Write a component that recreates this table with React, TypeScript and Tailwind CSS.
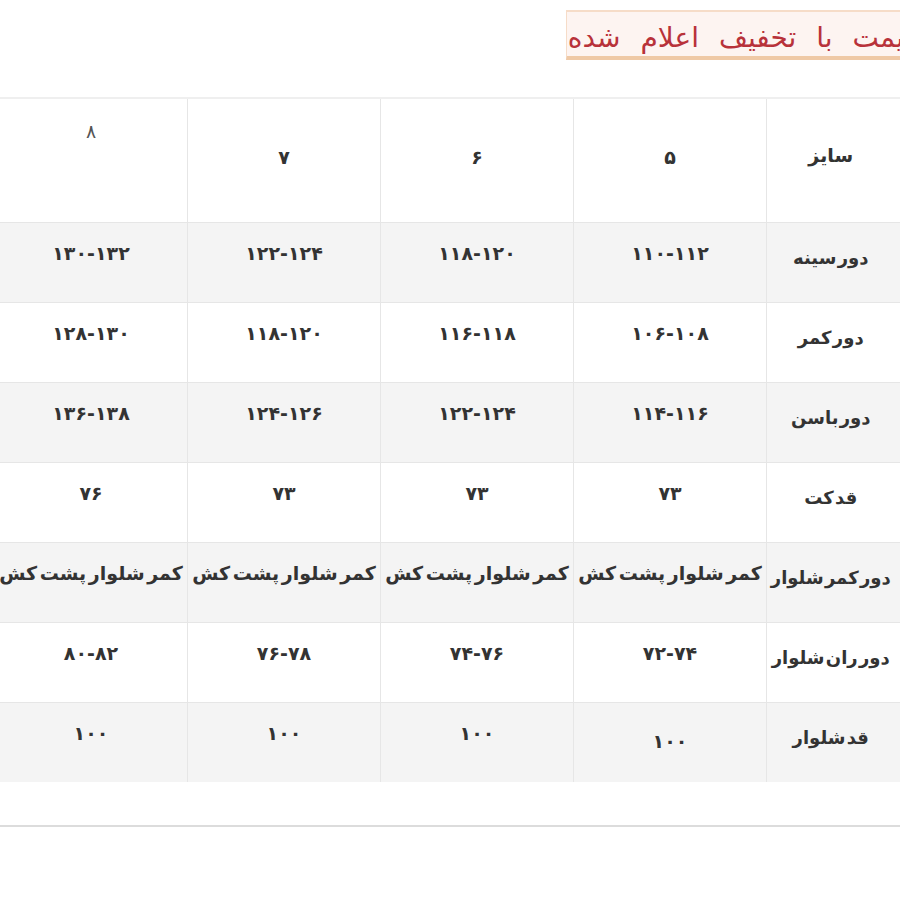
const sizes = ['۵', '۶', '۷', '۸']

const rows: { label: string; values: string[] }[] = [
  { label: 'دور سینه', values: ['۱۱۰-۱۱۲', '۱۱۸-۱۲۰', '۱۲۲-۱۲۴', '۱۳۰-۱۳۲'] },
  { label: 'دور کمر', values: ['۱۰۶-۱۰۸', '۱۱۶-۱۱۸', '۱۱۸-۱۲۰', '۱۲۸-۱۳۰'] },
  { label: 'دور باسن', values: ['۱۱۴-۱۱۶', '۱۲۲-۱۲۴', '۱۲۴-۱۲۶', '۱۳۶-۱۳۸'] },
  { label: 'قد کت', values: ['۷۳', '۷۳', '۷۳', '۷۶'] },
  {
    label: 'دور کمر شلوار',
    values: ['کمر شلوار پشت کش', 'کمر شلوار پشت کش', 'کمر شلوار پشت کش', 'کمر شلوار پشت کش'],
  },
  { label: 'دور ران شلوار', values: ['۷۲-۷۴', '۷۴-۷۶', '۷۶-۷۸', '۸۰-۸۲'] },
  { label: 'قد شلوار', values: ['۱۰۰', '۱۰۰', '۱۰۰', '۱۰۰'] },
]

export default function App() {
  return (
    <div
      className="w-[900px] h-[900px] overflow-hidden bg-white text-[#333]"
      style={{ fontFamily: '"DejaVu Sans", sans-serif' }}
    >
      {/* discount notice */}
      <div className="pt-[10px] pl-[566px]">
        <div
          dir="rtl"
          className="w-[360px] h-[50px] flex items-center bg-[#fdf4f1] border-t-2 border-l border-[#f6dcc8] border-b-4 border-b-[#efc9a6] pr-[8px] pt-[8px] text-[28px] text-[#b8323a] [word-spacing:11px] whitespace-nowrap"
        >
          قیمت با تخفیف اعلام شده
        </div>
      </div>

      {/* size table */}
      <div className="mt-[37px] ml-[-6px]">
        <table dir="rtl" className="w-[912px] border-collapse table-fixed text-[19px] font-bold">
          <colgroup>
            <col className="w-[140px]" />
            <col className="w-[193px]" />
            <col className="w-[193px]" />
            <col className="w-[193px]" />
            <col className="w-[193px]" />
          </colgroup>
          <thead>
            <tr className="h-[124px] bg-white border-t-2 border-[#efefef]">
              <th className="border-l border-[#e6e6e6] text-center font-bold pr-[12px] pb-[10px]">سایز</th>
              {sizes.map((s, i) => (
                <th
                  key={s}
                  className={
                    i === 3
                      ? 'border-l border-[#e6e6e6] text-center font-normal text-[#555] align-top pt-[18px]'
                      : 'border-l border-[#e6e6e6] text-center font-bold pb-[6px]'
                  }
                >
                  {s}
                </th>
              ))}
            </tr>
          </thead>
          <tbody>
            {rows.map((row, r) => (
              <tr
                key={row.label}
                className={r % 2 === 0 ? 'h-[80px] bg-[#f4f4f4]' : 'h-[80px] bg-white'}
              >
                <td className="border-l border-t border-[#e6e6e6] text-center text-[18px] pr-[12px] pb-[10px] whitespace-nowrap [word-spacing:-5px]">
                  {row.label}
                </td>
                {row.values.map((v, i) => (
                  <td
                    key={i}
                    className={
                      r === 6 && i === 0
                        ? 'border-l border-t border-[#e6e6e6] text-center whitespace-nowrap pb-[2px]'
                        : 'border-l border-t border-[#e6e6e6] text-center whitespace-nowrap pb-[18px] [word-spacing:-4px]'
                    }
                  >
                    {v}
                  </td>
                ))}
              </tr>
            ))}
          </tbody>
        </table>
      </div>

      <div className="mt-[43px] h-[2px] bg-[#dcdcdc]" />
    </div>
  )
}
